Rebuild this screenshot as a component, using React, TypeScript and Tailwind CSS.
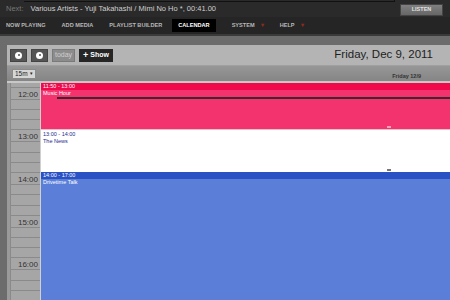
import React from "react";

const hours = ["11", "12", "13", "14", "15", "16", "17"];

const NavItem = ({ label, active, menu }: { label: string; active?: boolean; menu?: boolean }) => (
  <div
    className={`flex items-center h-[13px] px-[6px] text-[5.6px] font-bold ${
      active ? "bg-black text-white" : "text-[#b8b8b8]"
    }`}
  >
    {label}
    {menu && <span className="ml-[6px] text-[6px] text-[#8a2a1e]">▾</span>}
  </div>
);

const CircleBtn = () => (
  <div className="w-[17px] h-[13px] bg-[#555] border border-[#444] flex items-center justify-center">
    <div className="w-[7px] h-[7px] rounded-full bg-white flex items-center justify-center">
      <div className="w-[2px] h-[2px] rounded-full bg-[#555]" />
    </div>
  </div>
);

const Handle = ({ color }: { color: string }) => (
  <div className="absolute bottom-[1px] left-[346px] w-[4px] h-[2px]" style={{ background: color }} />
);

export default function App() {
  return (
    <div className="w-[450px] h-[300px] overflow-hidden bg-[#6c6c6c] flex flex-col font-['Liberation_Sans',Arial,sans-serif]">
      {/* now playing bar */}
      <div className="h-[17px] bg-[#2a2a2a] relative flex items-center px-[6px] shrink-0">
        <div className="absolute top-0 left-[24px] w-[371px] h-[2px] border-b border-r border-[#111]" />
        <span className="text-[7.5px] text-[#777]">Next:</span>
        <span className="ml-[7px] text-[7.5px] text-[#cfcfcf]">
          Various Artists - Yuji Takahashi / Mimi No Ho *, 00:41.00
        </span>
        <div className="ml-auto mr-[1px] mt-[2px] w-[43px] h-[12px] bg-gradient-to-b from-[#808080] to-[#666] border border-[#444] flex items-center justify-center text-[5.5px] font-bold text-[#e0e0e0]">
          LISTEN
        </div>
      </div>

      {/* main nav */}
      <div className="h-[19px] bg-[#252525] border-b-2 border-[#3a3a3a] flex items-center gap-[4px] shrink-0">
        <NavItem label="NOW PLAYING" />
        <NavItem label="ADD MEDIA" />
        <NavItem label="PLAYLIST BUILDER" />
        <NavItem label="CALENDAR" active />
        <div className="w-[2px]" />
        <NavItem label="SYSTEM" menu />
        <NavItem label="HELP" menu />
      </div>

      {/* calendar panel */}
      <div className="flex-1 pl-[7px] pt-[9px] flex">
        <div className="flex-1 bg-[#b4b4b4] flex flex-col overflow-hidden">
          {/* toolbar */}
          <div className="h-[20px] flex items-center pl-[3px] gap-[4px] shrink-0">
            <CircleBtn />
            <CircleBtn />
            <div className="w-[23px] h-[13px] bg-[#8c8c8c] border border-[#7a7a7a] flex items-center justify-center text-[7px] text-[#cfcfcf]">
              today
            </div>
            <div className="w-[34px] h-[13px] bg-[#262626] flex items-center justify-center gap-[2px] text-[7px] text-white font-bold">
              <span className="text-[9px] leading-none">+</span>Show
            </div>
            <div className="ml-auto mr-[17px] text-[11.5px] text-[#1e1e1e]">Friday, Dec 9, 2011</div>
          </div>

          {/* header row */}
          <div className="h-[16px] bg-gradient-to-b from-[#979797] to-[#858585] border-t border-[#a0a0a0] flex items-center shrink-0">
            <div className="ml-[5px] w-[24px] h-[10px] bg-[#d6d6d6] border border-[#8a8a8a] flex items-center pl-[2px] text-[6.5px] text-[#222]">
              15m
              <span className="ml-[2px] text-[5px]">▾</span>
            </div>
            <div className="flex-1 text-right pr-[29px] text-[5.5px] font-bold text-[#333] pt-[5px]">Friday 12/9</div>
          </div>

          {/* grid */}
          <div className="flex-1 flex overflow-hidden border-t-2 border-[#c8c8c8]">
            <div className="w-[33px] pl-[3px] shrink-0 bg-[#9a9a9a]">
              <div className="-mt-[38px]">
                {hours.map((h) => (
                  <div key={h} className="h-[42.7px] flex flex-col">
                    {[0, 1, 2, 3].map((q) => (
                      <div
                        key={q}
                        className="flex-1 bg-[#a6a6a6] border-b border-[#8a8a8a] border-l border-[#8a8a8a] text-right pr-[2px] pt-[2px] text-[8px] leading-[9px] text-[#333]"
                      >
                        {q === 0 && h !== "11" && h !== "17" ? `${h}:00` : ""}
                      </div>
                    ))}
                  </div>
                ))}
              </div>
            </div>

            <div className="flex-1 flex flex-col border-l border-[#d0d0d0]">
              {/* Music Hour */}
              <div className="h-[46px] bg-[#f2336e] relative shrink-0">
                <div className="h-[7px] bg-[#f00a4c] px-[2px] text-[5.5px] leading-[7px] text-white">11:50 - 13:00</div>
                <div className="px-[2px] text-[5.5px] leading-[7px] text-white">Music Hour</div>
                <div className="absolute left-[16px] right-0 top-[14px] h-[2px] bg-[#3a2a30]" />
                <Handle color="#f7a0b8" />
              </div>
              {/* The News */}
              <div className="h-[42.7px] bg-white relative shrink-0 border-t border-[#e8c0cc]">
                <div className="px-[2px] pt-[1px] text-[5.5px] leading-[7px] text-[#1d2a8c]">13:00 - 14:00</div>
                <div className="px-[2px] text-[5.5px] leading-[7px] text-[#1d2a8c]">The News</div>
                <Handle color="#777" />
              </div>
              {/* Drivetime Talk */}
              <div className="flex-1 bg-[#5b7fd8] relative">
                <div className="h-[7px] bg-[#2a52c4] px-[2px] text-[5.5px] leading-[7px] text-white">14:00 - 17:00</div>
                <div className="px-[2px] text-[5.5px] leading-[7px] text-white">Drivetime Talk</div>
              </div>
            </div>
          </div>
        </div>
      </div>
    </div>
  );
}
